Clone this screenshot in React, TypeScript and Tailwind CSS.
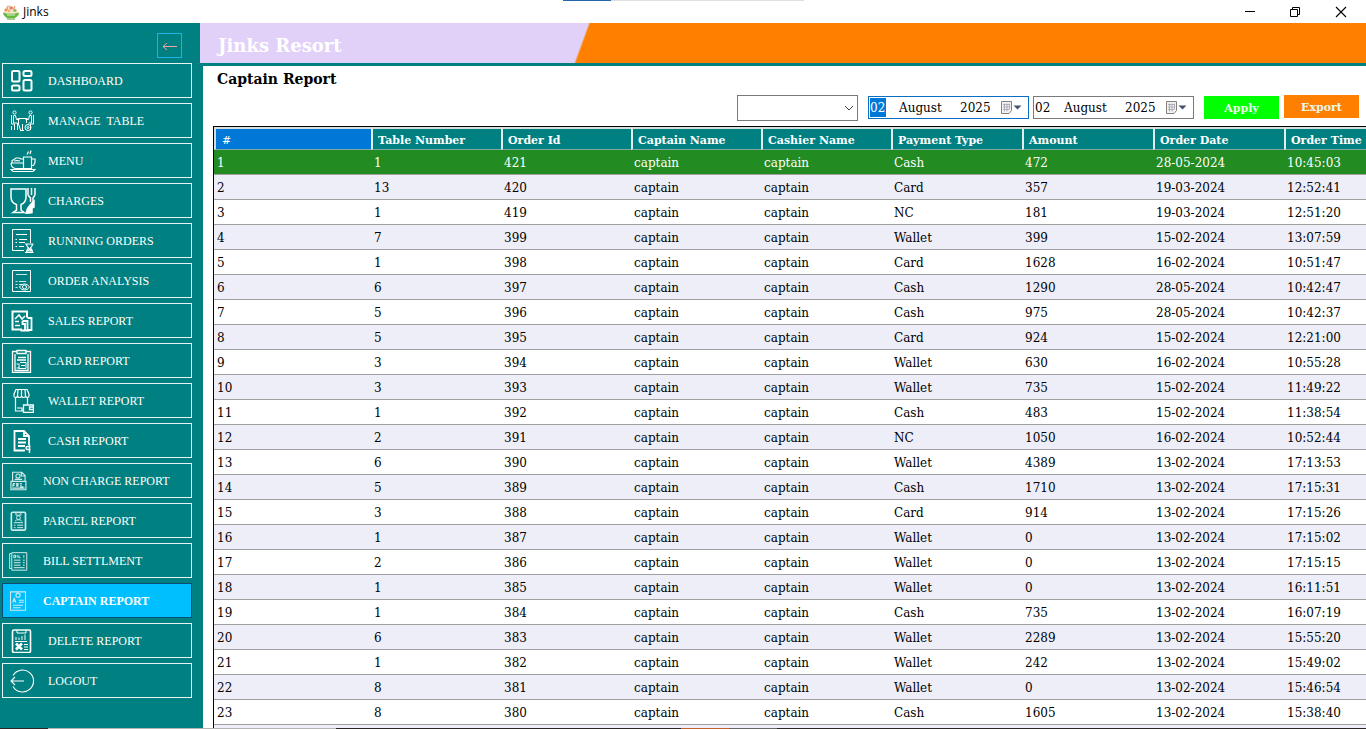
import React from "react";

type IconProps = { children: React.ReactNode; size?: string };

function Glyph({ children, size = "size-6" }: IconProps) {
  return (
    <svg viewBox="0 0 24 24" className={`${size} shrink-0`} fill="none" stroke="currentColor" strokeWidth="1" aria-hidden="true">
      {children}
    </svg>
  );
}

const icons: Record<string, React.ReactNode> = {
  dashboard: (
    <Glyph>
      <g strokeWidth="2">
        <rect x="2" y="2" width="7.5" height="10.5" rx="1.5" />
        <rect x="13.5" y="2" width="8" height="5" rx="1.5" />
        <rect x="2" y="16.5" width="7.5" height="5" rx="1.5" />
        <rect x="13.5" y="11" width="8" height="10.5" rx="1.5" />
      </g>
    </Glyph>
  ),
  table: (
    <Glyph>
      <circle cx="4.500" cy="3.500" r="1.600" />
      <circle cx="20.500" cy="3.500" r="1.600" />
      <path d="M1.500 6v9h3v6M23.500 6v9h-3v6M3.500 6.500h2l1 4h3M21.500 6.500h-2l-1 4h-3M3.500 7v7h4v7M21.500 7v7h-3M7.500 9.500h10M8.500 10v5l2 6M16.500 10v4M10 21.500h4M12.500 15v6M1.500 21v-4" />
      <circle cx="18" cy="18.500" r="3" />
      <circle cx="18" cy="18.500" r="1" />
    </Glyph>
  ),
  menu: (
    <svg viewBox="0 0 26 24" className="h-6 w-[26px] shrink-0" fill="none" stroke="currentColor" strokeWidth="1.200" aria-hidden="true">
      <path d="M13.500 8h8v11.500h-8zM21.500 10h3.500v3.500l-1.500 3h-2M17 5.500l1.500-3M20 5l1-3.500M1 14h12M1 14c0 3 2 5 4 5.500h8M2 13.500v-2l2-1 2-1.500h3l2 1h2M4 12l3-.500 3 .500M1 20.500h24l-2 2H3z" />
    </svg>
  ),
  charges: (
    <svg viewBox="0 0 26 26" className="size-[26px] shrink-0" fill="none" stroke="currentColor" strokeWidth="1.500" aria-hidden="true">
      <path d="M1 1h15v8c0 4-2 6.500-5 7.500v5.500l3 2.500H3L6.500 22v-5.500C3 15.500 1 13 1 9z" />
      <path d="M18 0v7M21.500 0v7M25 0v7M18 7l2.500 3v4M25 7l-2 3v4" />
      <path d="M24 13v6l-2 1v4.500l-6 1 1.500-5 3-4z" fill="currentColor" />
    </svg>
  ),
  running: (
    <Glyph>
      <path d="M14 21.500H2.500v-21h18V14M6 5.500h11M5.500 10.500h1.500M9 10.500h8M5.500 13.500h1.500M9 13.500h6M5.500 17.500h1.500M9 17.500h5" />
      <path d="M15 15h8.500M15 23.500h8.500M16.500 15c0 2 1 3 2 4-1 1-2 2.500-2 4.500M22.500 15c0 2-1 3-2 4 1 1 2 2.500 2 4.500M18 22l1.500-2 1.500 2z" strokeWidth="1.200" />
    </Glyph>
  ),
  analysis: (
    <Glyph>
      <path d="M2.500 1.500h18v21h-18z" />
      <path d="M6 5.500h11M5.500 12.500h2M9 12.500h7M5.500 15.500h2M9 15.500h3M5.500 18.500h2" strokeOpacity="0.800" />
      <path d="M9.500 18c2.500-4 7.500-4 10 0-2.500 4-7.500 4-10 0z" />
      <circle cx="14.500" cy="18" r="2" />
    </Glyph>
  ),
  sales: (
    <Glyph>
      <path d="M12 20.500H2.500v-18H17v6" strokeWidth="2" />
      <path d="M5 10l4-4 3 4 3-3M5 12.500h4M5 16.500h5" strokeWidth="1.500" />
      <path d="M12.500 12h5v9M12.500 12v3h2.500v6M17.500 9h4v12h-3M10.500 21.500h9" strokeWidth="1.800" />
    </Glyph>
  ),
  card: (
    <Glyph>
      <path d="M6.500 2.500h-4v21h18v-21h-4M5 5v16.500h13V5M7 1.500h9v3H7zM8 8.500h8M7 11h9" strokeWidth="1.300" />
      <path d="M10 13.500h6v6H9v-4M6.500 15h3M11 16.500h4M6.500 19h3" />
    </Glyph>
  ),
  wallet: (
    <Glyph>
      <path d="M6 .500h11l2 4.500v2c0 2-3 2-3.500 0 0 2-3.500 2-4 0 0 2-3.500 2-4 0C7 9 4 9 4 7V5zM8 1l-.500 6M11.500 1v6M15 1l.500 6M5.500 9v13H13M17.500 9v6M7 19h5v3" strokeWidth="1.200" />
      <path d="M13.500 16h10v7.500h-10zM23 18h-3.500v2.500H23" strokeWidth="1.300" />
    </Glyph>
  ),
  cash: (
    <Glyph>
      <path d="M15 21.500H4.500V2H14l5 5v9M14 2v5h5M8 10h8M8 13.500h8M8 17h7" strokeWidth="1.800" />
      <path d="M20.500 17.500h-3c-2 0-2 3 0 3h3M19.500 16v8" strokeWidth="1.400" />
    </Glyph>
  ),
  noncharge: (
    <Glyph size="size-5">
      <path d="M5.500 12V1.500h11l4 4V12M16 1.500v4.500h4M8 10h9M3.500 12.500h18v10h-18zM6 12.500h13M5 20.500h15M6 15v4M6 15h2.500M6 17h2M10.500 19v-4H12v4M14.500 15h2M14.500 17h2M14.500 19h4" strokeWidth="1.400" />
      <circle cx="12" cy="6" r="2.500" strokeWidth="1.300" />
    </Glyph>
  ),
  parcel: (
    <Glyph size="size-5">
      <rect x="4" y="1.500" width="17" height="21.500" rx="1.500" strokeWidth="2" />
      <path d="M9.500 2h6v3h-6zM7 14h11M7 17h2M11 17h7M7 20h2M11 20h7M8.500 12c1-2 7-2 8 0" strokeWidth="1.200" />
      <circle cx="12.500" cy="8" r="2.300" strokeWidth="1.200" />
    </Glyph>
  ),
  bill: (
    <Glyph size="size-5">
      <path d="M4.500 2H22.500v21H4.500zM4 3H2v18h2.500M7 5v3h2V5zM11 5v3M13 5v3h2M19 5v3M7 11h8M18 11h2M7 14h8M18 14h2M7 17h8M18 17h2M7 20h13" strokeWidth="1.200" />
    </Glyph>
  ),
  captain: (
    <Glyph size="size-5">
      <path d="M3 1h18v22H3zM5.500 14l2-5 2 5M6.500 12h3M13 11h6M13 13.500h6M6 17h12M6 20h9" strokeWidth="1.300" />
      <circle cx="12" cy="5" r="2.500" strokeWidth="1.300" />
    </Glyph>
  ),
  delete: (
    <Glyph>
      <rect x="2.500" y="1" width="18" height="22.500" rx="1.500" strokeWidth="1.600" />
      <path d="M7 1v3h9V1M5 12.500h12M6 11V8M9 11V8.500M12 11V7M15 11V5.500M14 15.500h4M14 18h4M14 20.500h4" />
      <path d="M6 14.500l6 6M12 14.500l-6 6" strokeWidth="2.500" />
    </Glyph>
  ),
  logout: (
    <Glyph>
      <path d="M3 6.500a11 11 0 1 1 0 11M1 12h13M5 8l-4 4 4 4" strokeWidth="1.100" />
    </Glyph>
  ),
};

const menu = [
  { id: "dashboard", label: "DASHBOARD" },
  { id: "table", label: "MANAGE  TABLE" },
  { id: "menu", label: "MENU" },
  { id: "charges", label: "CHARGES" },
  { id: "running", label: "RUNNING ORDERS" },
  { id: "analysis", label: "ORDER ANALYSIS" },
  { id: "sales", label: "SALES REPORT" },
  { id: "card", label: "CARD REPORT" },
  { id: "wallet", label: "WALLET REPORT" },
  { id: "cash", label: "CASH REPORT" },
  { id: "noncharge", label: "NON CHARGE REPORT", compact: true },
  { id: "parcel", label: "PARCEL REPORT", compact: true },
  { id: "bill", label: "BILL SETTLMENT", compact: true },
  { id: "captain", label: "CAPTAIN REPORT", compact: true, active: true },
  { id: "delete", label: "DELETE REPORT" },
  { id: "logout", label: "LOGOUT" },
];

const columns = ["#", "Table Number", "Order Id", "Captain Name", "Cashier Name", "Payment Type", "Amount", "Order Date", "Order Time"];

// table number, order id, payment type, amount, date, time
const orders: [number, number, string, number, string, string][] = [
  [1, 421, "Cash", 472, "28-05-2024", "10:45:03"],
  [13, 420, "Card", 357, "19-03-2024", "12:52:41"],
  [1, 419, "NC", 181, "19-03-2024", "12:51:20"],
  [7, 399, "Wallet", 399, "15-02-2024", "13:07:59"],
  [1, 398, "Card", 1628, "16-02-2024", "10:51:47"],
  [6, 397, "Cash", 1290, "28-05-2024", "10:42:47"],
  [5, 396, "Cash", 975, "28-05-2024", "10:42:37"],
  [5, 395, "Card", 924, "15-02-2024", "12:21:00"],
  [3, 394, "Wallet", 630, "16-02-2024", "10:55:28"],
  [3, 393, "Wallet", 735, "15-02-2024", "11:49:22"],
  [1, 392, "Cash", 483, "15-02-2024", "11:38:54"],
  [2, 391, "NC", 1050, "16-02-2024", "10:52:44"],
  [6, 390, "Wallet", 4389, "13-02-2024", "17:13:53"],
  [5, 389, "Cash", 1710, "13-02-2024", "17:15:31"],
  [3, 388, "Card", 914, "13-02-2024", "17:15:26"],
  [1, 387, "Wallet", 0, "13-02-2024", "17:15:02"],
  [2, 386, "Wallet", 0, "13-02-2024", "17:15:15"],
  [1, 385, "Wallet", 0, "13-02-2024", "16:11:51"],
  [1, 384, "Cash", 735, "13-02-2024", "16:07:19"],
  [6, 383, "Wallet", 2289, "13-02-2024", "15:55:20"],
  [1, 382, "Wallet", 242, "13-02-2024", "15:49:02"],
  [8, 381, "Wallet", 0, "13-02-2024", "15:46:54"],
  [8, 380, "Cash", 1605, "13-02-2024", "15:38:40"],
];

function TitleBar() {
  return (
    <div className="relative flex h-[23px] shrink-0 items-center bg-white pl-[3px] font-['Open_Sans',sans-serif] text-xs">
      <div className="absolute top-0 left-[563px] flex h-px w-[241px] bg-[#e0e0e0]">
        <span className="w-12 bg-[#2467a8]" />
      </div>
      <svg viewBox="0 0 16 16" className="size-4" aria-hidden="true">
        <path d="M1 5l4-4 5 1 3 2 2 5H1z" fill="#f8e3cf" />
        <path d="M4 6l1-4M7 6V2M10 7l2-5" stroke="#e07a4d" strokeWidth="0.800" />
        <circle cx="3" cy="6" r="1.300" fill="#e88b42" />
        <circle cx="8.500" cy="4" r="1.300" fill="#e96a58" />
        <circle cx="12" cy="6.500" r="1.500" fill="#8cc460" />
        <circle cx="6" cy="7" r="1.200" fill="#f1b44b" />
        <path d="M0 8.500l4 1h8l4-1c0 3-2 4-4 5.500H4C2 13 0 11 0 8.500z" fill="#69b93f" />
        <path d="M4 11h8" stroke="#d9f0c4" strokeWidth="1" />
        <path d="M4 14.500h8v1H4z" fill="#4a9a2d" />
      </svg>
      <span className="ml-1">Jinks</span>
      <div className="ml-auto flex items-center pr-[19px]">
        <button type="button" aria-label="Minimize" className="flex w-[45px] justify-end">
          <svg viewBox="0 0 12 12" className="size-3" stroke="black" aria-hidden="true"><path d="M1 5.500h10" /></svg>
        </button>
        <button type="button" aria-label="Restore" className="flex w-[45px] justify-end">
          <svg viewBox="0 0 12 12" className="size-3" fill="none" stroke="black" aria-hidden="true"><path d="M1.500 3.500h7v7h-7zM3.500 3.500v-2h7v7h-2" /></svg>
        </button>
        <button type="button" aria-label="Close" className="flex w-[46px] justify-end">
          <svg viewBox="0 0 12 12" className="size-3" stroke="black" strokeWidth="1.100" aria-hidden="true"><path d="M1 1l10 10M11 1L1 11" /></svg>
        </button>
      </div>
    </div>
  );
}

function Sidebar() {
  return (
    <aside className="flex w-[200px] shrink-0 flex-col bg-[#008080] pr-2 pl-0.5 font-['Liberation_Serif',serif] text-xs text-white">
      <div className="flex h-10 shrink-0 items-end justify-end pr-2.5 pb-[5px]">
        <button type="button" aria-label="Collapse menu" className="flex size-[25px] items-center justify-center border border-[#19b5e8] text-[#f3a3a3]">
          <svg viewBox="0 0 16 10" className="h-2.5 w-4" fill="none" stroke="currentColor" aria-hidden="true"><path d="M1 5.500h14M5 2L1 5.500 5 9" /></svg>
        </button>
      </div>
      <nav className="flex flex-col gap-[5px]">
        {menu.map((item) => (
          <a
            key={item.id}
            href={`#${item.id}`}
            className={`flex h-[35px] items-center border whitespace-pre ${item.compact ? "pl-[5px]" : "pl-[7px]"} ${
              item.active ? "border-[#0b4f78] bg-[#00bfff] font-bold" : "border-[#e8f4f4]"
            }`}
          >
            <span className={`flex shrink-0 items-center ${item.compact ? "w-[35px] text-[#cfeaea]" : "w-[38px]"}`}>{icons[item.id]}</span>
            {item.label}
          </a>
        ))}
      </nav>
    </aside>
  );
}

function DateBox({ name, focused }: { name: string; focused?: boolean }) {
  return (
    <div
      role="group"
      aria-label={name}
      className={`flex h-[23px] w-[161px] items-center border bg-white pl-px ${focused ? "border-[#0a6fc2]" : "border-[#7a7a7a]"}`}
    >
      <input aria-label={`${name} day`} defaultValue="02" className={`h-[19px] w-4 ${focused ? "bg-[#0078d7] text-white" : ""}`} />
      <input aria-label={`${name} month`} defaultValue="August" className="ml-3 w-14 pl-px" />
      <input aria-label={`${name} year`} defaultValue="2025" className="ml-1 w-9 pl-0.5" />
      <button type="button" aria-label={`Open ${name} calendar`} className="ml-1.5">
        <svg viewBox="0 0 22 13" className="h-[13px] w-[22px]" aria-hidden="true">
          <path d="M1.500 .500h10v9l-2.500 3H1.500z" fill="#f2f2f2" stroke="#85807e" />
          <path d="M3 3.500h7M3 6h7M3 8.500h6M4.500 2.500v8M7 2.500v8M9.500 2.500v6" stroke="#a3a1ae" strokeWidth="0.800" />
          <path d="M13.500 4.500h8l-4 4z" fill="#44546f" />
        </svg>
      </button>
    </div>
  );
}

function Toolbar() {
  return (
    <div className="flex h-[34px] shrink-0 items-start justify-end gap-2.5 pt-[3px] pr-[7px] text-xs">
      <div className="relative">
        <select aria-label="Captain" className="block h-[26px] w-[121px] appearance-none border border-[#7a7a7a] bg-white">
          <option></option>
          <option>captain</option>
        </select>
        <svg viewBox="0 0 10 6" className="pointer-events-none absolute top-2.5 right-1 h-1.5 w-2.5" fill="none" stroke="#444" aria-hidden="true"><path d="M1 1l4 4 4-4" /></svg>
      </div>
      <div className="flex gap-1 pt-px">
        <DateBox name="From date" focused />
        <DateBox name="To date" />
      </div>
      <div className="flex items-start gap-[5px] text-[11px] font-bold text-[#eaf9ea]">
        <button type="button" className="mt-px h-[23px] w-[75px] bg-[#00ff00] pt-1">Apply</button>
        <button type="button" className="h-[23px] w-[75px] bg-[#ff8000] pt-1">Export</button>
      </div>
    </div>
  );
}

function ReportTable() {
  return (
    <div className="ml-2.5 min-h-0 flex-1 overflow-hidden border-t border-l border-black">
      <table className="w-full min-w-[1152px] table-fixed border-separate border-spacing-0 text-left text-xs">
        <colgroup>
          <col className="w-[157px]" />
          <col className="w-[130px]" />
          <col className="w-[130px]" />
          <col className="w-[130px]" />
          <col className="w-[130px]" />
          <col className="w-[131px]" />
          <col className="w-[131px]" />
          <col className="w-[131px]" />
          <col />
        </colgroup>
        <thead>
          <tr className="h-[23px] text-[11px] leading-4 text-white">
            {columns.map((name, i) => (
              <th
                key={name}
                scope="col"
                className={`border-t-2 border-b border-l-2 border-t-[#d5dede] border-b-[#7fa8a8] px-0 pt-1 pb-0 whitespace-nowrap ${
                  i === 0 ? "border-l-[#d5dede] bg-[#0078d7] pl-1.5 font-normal" : "border-l-[#e3eded] bg-[#008080] pl-[5px]"
                }`}
              >
                {name}
              </th>
            ))}
          </tr>
        </thead>
        <tbody>
          {orders.map(([table, id, payment, amount, date, time], i) => (
            <tr key={id} className={`h-[25px] ${i === 0 ? "bg-[#228b22] text-white" : i % 2 ? "bg-[#eeeef9]" : "bg-white"}`}>
              {[i + 1, table, id, "captain", "captain", payment, amount, date, time].map((value, c) => (
                <td key={columns[c]} className="border-b border-[#a0a0a0] pt-0.5 pr-0 pb-0 pl-[3px] whitespace-nowrap">{value}</td>
              ))}
            </tr>
          ))}
          <tr className="h-[25px] bg-[#eeeef9]">
            <td colSpan={9} />
          </tr>
        </tbody>
      </table>
    </div>
  );
}

export default function App() {
  return (
    <div className="flex h-screen flex-col overflow-hidden bg-white font-['DejaVu_Serif',serif] text-black">
      <TitleBar />
      <div className="flex min-h-0 flex-1">
        <Sidebar />
        <div className="flex min-w-0 flex-1 flex-col">
          <header className="flex h-[43px] shrink-0 items-center border-b-3 border-[#008080] bg-[linear-gradient(110deg,#e1d1f8_365px,#ff8000_367px)] pt-1.5 pl-[18px] text-lg font-bold text-white">
            Jinks Resort
          </header>
          <main className="flex min-h-0 flex-1 flex-col border-l-3 border-[#008080] bg-white">
            <h1 className="h-[26px] shrink-0 pl-3.5 text-sm leading-[26px] font-bold">Captain Report</h1>
            <Toolbar />
            <ReportTable />
          </main>
        </div>
      </div>
      <div className="flex h-px shrink-0 bg-[#2b2525]">
        <span className="w-12" />
        <span className="w-72 bg-[#b4b4b4]" />
        <span className="ml-[345px] w-12 bg-[#c0622a]" />
        <span className="w-12 bg-[#666]" />
      </div>
    </div>
  );
}
